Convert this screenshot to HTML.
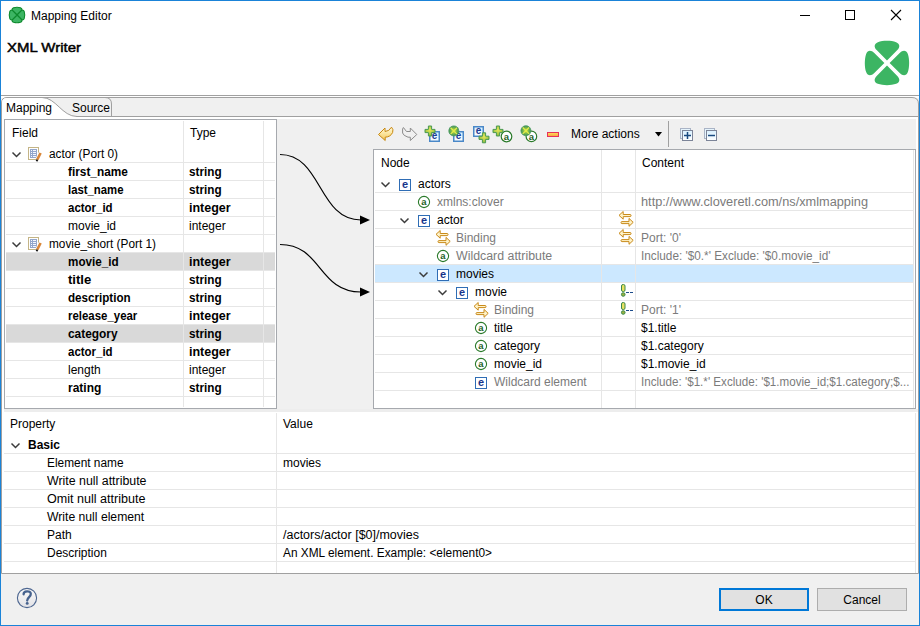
<!DOCTYPE html>
<html><head><meta charset="utf-8"><style>
html,body{margin:0;padding:0;width:920px;height:626px;overflow:hidden;background:#f0f0f0}
svg{display:block}
text{font-family:"Liberation Sans",sans-serif;white-space:pre}
</style></head><body>
<svg width="920" height="626" viewBox="0 0 920 626">
<rect x="0" y="0" width="920" height="626" fill="#f0f0f0"/>
<rect x="1" y="1" width="918" height="97" fill="#ffffff"/>
<rect x="1" y="95" width="918" height="1" fill="#a0a0a0"/>
<rect x="0" y="0" width="920" height="1" fill="#1a83d8"/>
<rect x="0" y="625" width="920" height="1" fill="#1a83d8"/>
<rect x="0" y="0" width="1" height="626" fill="#1a83d8"/>
<rect x="919" y="0" width="1" height="626" fill="#1a83d8"/>
<g transform="translate(17,15) scale(0.95)" fill="#3cb563" stroke="#0e8a2e" stroke-width="1.2" stroke-linejoin="round"><path transform="rotate(0)" d="M0,0L-4.6,-4.6C-5.6,-5.8 -5.2,-7 -3.6,-7.6C-1.6,-8.2 1.6,-8.2 3.6,-7.6C5.2,-7 5.6,-5.8 4.6,-4.6Z"/><path transform="rotate(90)" d="M0,0L-4.6,-4.6C-5.6,-5.8 -5.2,-7 -3.6,-7.6C-1.6,-8.2 1.6,-8.2 3.6,-7.6C5.2,-7 5.6,-5.8 4.6,-4.6Z"/><path transform="rotate(180)" d="M0,0L-4.6,-4.6C-5.6,-5.8 -5.2,-7 -3.6,-7.6C-1.6,-8.2 1.6,-8.2 3.6,-7.6C5.2,-7 5.6,-5.8 4.6,-4.6Z"/><path transform="rotate(270)" d="M0,0L-4.6,-4.6C-5.6,-5.8 -5.2,-7 -3.6,-7.6C-1.6,-8.2 1.6,-8.2 3.6,-7.6C5.2,-7 5.6,-5.8 4.6,-4.6Z"/></g>
<text x="31" y="20" font-size="12" fill="#000" >Mapping Editor</text>
<g stroke="#000" stroke-width="1" fill="none" shape-rendering="crispEdges">
<path d="M800,15.5H810"/>
<rect x="845.5" y="10.5" width="9" height="9"/>
</g>
<path d="M891,10L901,20M901,10L891,20" stroke="#000" stroke-width="1.1" fill="none"/>
<text x="7" y="52" font-size="13.4" fill="#000" stroke="#000" stroke-width="0.45" textLength="74" lengthAdjust="spacingAndGlyphs">XML Writer</text>
<g transform="translate(887,63) scale(0.97)" fill="#3cb563"><path transform="rotate(0)" d="M0,-2.7L-10.4,-13.1C-13.8,-16.5 -13.4,-19.9 -9.4,-21.5C-4.2,-23.3 4.2,-23.3 9.4,-21.5C13.4,-19.9 13.8,-16.5 10.4,-13.1Z"/><path transform="rotate(90)" d="M0,-2.7L-10.4,-13.1C-13.8,-16.5 -13.4,-19.9 -9.4,-21.5C-4.2,-23.3 4.2,-23.3 9.4,-21.5C13.4,-19.9 13.8,-16.5 10.4,-13.1Z"/><path transform="rotate(180)" d="M0,-2.7L-10.4,-13.1C-13.8,-16.5 -13.4,-19.9 -9.4,-21.5C-4.2,-23.3 4.2,-23.3 9.4,-21.5C13.4,-19.9 13.8,-16.5 10.4,-13.1Z"/><path transform="rotate(270)" d="M0,-2.7L-10.4,-13.1C-13.8,-16.5 -13.4,-19.9 -9.4,-21.5C-4.2,-23.3 4.2,-23.3 9.4,-21.5C13.4,-19.9 13.8,-16.5 10.4,-13.1Z"/></g>
<path d="M1.5,573.5V103 Q1.5,97.5 7,97.5H912 Q918.5,97.5 918.5,104V573.5H1.5Z" fill="#f0f0f0" stroke="#a0a0a0" stroke-width="1"/>
<rect x="76" y="116" width="842" height="1" fill="#a0a0a0"/>
<rect x="2" y="117" width="916" height="2" fill="#ffffff"/>
<rect x="2" y="117" width="2" height="295" fill="#ffffff"/>
<rect x="916" y="119" width="2" height="290" fill="#ffffff"/>
<path d="M46,97.5H105 Q111.5,97.5 111.5,104V116" fill="none" stroke="#a0a0a0"/>
<path d="M2,117V103 Q2,98 7,98H42 C56,98 62,116.5 77,116.5V119H2Z" fill="#ffffff"/>
<path d="M42,97.5 C56,97.5 62,116.5 77,116.5" fill="none" stroke="#a0a0a0"/>
<text x="6" y="112" font-size="12" fill="#000" >Mapping</text>
<text x="72" y="112" font-size="12" fill="#000" >Source</text>
<rect x="4" y="119" width="273" height="290" fill="#a6a9ae"/>
<rect x="5" y="120" width="271" height="288" fill="#ffffff"/>
<rect x="6" y="253" width="269" height="17" fill="#d9d9d9"/>
<rect x="6" y="325" width="269" height="17" fill="#d9d9d9"/>
<rect x="6" y="162" width="269" height="1" fill="#e6e6e6"/>
<rect x="6" y="180" width="269" height="1" fill="#e6e6e6"/>
<rect x="6" y="198" width="269" height="1" fill="#e6e6e6"/>
<rect x="6" y="216" width="269" height="1" fill="#e6e6e6"/>
<rect x="6" y="234" width="269" height="1" fill="#e6e6e6"/>
<rect x="6" y="252" width="269" height="1" fill="#e6e6e6"/>
<rect x="6" y="270" width="269" height="1" fill="#e6e6e6"/>
<rect x="6" y="288" width="269" height="1" fill="#e6e6e6"/>
<rect x="6" y="306" width="269" height="1" fill="#e6e6e6"/>
<rect x="6" y="324" width="269" height="1" fill="#e6e6e6"/>
<rect x="6" y="342" width="269" height="1" fill="#e6e6e6"/>
<rect x="6" y="360" width="269" height="1" fill="#e6e6e6"/>
<rect x="6" y="378" width="269" height="1" fill="#e6e6e6"/>
<rect x="6" y="396" width="269" height="1" fill="#e6e6e6"/>
<rect x="183" y="121" width="1" height="286" fill="#e6e6e6"/>
<rect x="263" y="121" width="1" height="286" fill="#e6e6e6"/>
<text x="12" y="137" font-size="12" fill="#000" >Field</text>
<text x="190" y="137" font-size="12" fill="#000" >Type</text>
<path d="M12.5,152.5L16.5,156.5L20.5,152.5" fill="none" stroke="#3c3c3c" stroke-width="1.5"/>
<g transform="translate(28,147)"><rect x="0.5" y="0.5" width="10" height="12" fill="#fff" stroke="#c4b486"/><rect x="2" y="2" width="7" height="9" fill="#93a7cc"/><path d="M3,3.5h1M5,3.5h3M3,5.5h1M5,5.5h3M3,7.5h1M5,7.5h3M3,9.5h1M5,9.5h3" stroke="#f4f8ff" stroke-width="1"/><path d="M9.2,12.6L12.6,6" stroke="#fff" stroke-width="4"/><path d="M9.2,12.6L12.6,6" stroke="#d9873a" stroke-width="2.6"/><path d="M8.5,14.2l0.9,-1.6" stroke="#111" stroke-width="1.8"/></g>
<text x="49" y="158" font-size="12" fill="#000"  textLength="69" lengthAdjust="spacingAndGlyphs">actor (Port 0)</text>
<text x="68" y="176" font-size="12" font-weight="bold" fill="#000"  textLength="59.9" lengthAdjust="spacingAndGlyphs">first_name</text>
<text x="189" y="176" font-size="12" font-weight="bold" fill="#000"  textLength="32.6" lengthAdjust="spacingAndGlyphs">string</text>
<text x="68" y="194" font-size="12" font-weight="bold" fill="#000"  textLength="55.5" lengthAdjust="spacingAndGlyphs">last_name</text>
<text x="189" y="194" font-size="12" font-weight="bold" fill="#000"  textLength="32.6" lengthAdjust="spacingAndGlyphs">string</text>
<text x="68" y="212" font-size="12" font-weight="bold" fill="#000"  textLength="44.6" lengthAdjust="spacingAndGlyphs">actor_id</text>
<text x="189" y="212" font-size="12" font-weight="bold" fill="#000"  textLength="41.7" lengthAdjust="spacingAndGlyphs">integer</text>
<text x="68" y="230" font-size="12" fill="#000" >movie_id</text>
<text x="189" y="230" font-size="12" fill="#000" >integer</text>
<path d="M12.5,242.5L16.5,246.5L20.5,242.5" fill="none" stroke="#3c3c3c" stroke-width="1.5"/>
<g transform="translate(28,237)"><rect x="0.5" y="0.5" width="10" height="12" fill="#fff" stroke="#c4b486"/><rect x="2" y="2" width="7" height="9" fill="#93a7cc"/><path d="M3,3.5h1M5,3.5h3M3,5.5h1M5,5.5h3M3,7.5h1M5,7.5h3M3,9.5h1M5,9.5h3" stroke="#f4f8ff" stroke-width="1"/><path d="M9.2,12.6L12.6,6" stroke="#fff" stroke-width="4"/><path d="M9.2,12.6L12.6,6" stroke="#d9873a" stroke-width="2.6"/><path d="M8.5,14.2l0.9,-1.6" stroke="#111" stroke-width="1.8"/></g>
<text x="49" y="248" font-size="12" fill="#000"  textLength="107" lengthAdjust="spacingAndGlyphs">movie_short (Port 1)</text>
<text x="68" y="266" font-size="12" font-weight="bold" fill="#000"  textLength="50.6" lengthAdjust="spacingAndGlyphs">movie_id</text>
<text x="189" y="266" font-size="12" font-weight="bold" fill="#000"  textLength="41.7" lengthAdjust="spacingAndGlyphs">integer</text>
<text x="68" y="284" font-size="12" font-weight="bold" fill="#000"  textLength="23.3" lengthAdjust="spacingAndGlyphs">title</text>
<text x="189" y="284" font-size="12" font-weight="bold" fill="#000"  textLength="32.6" lengthAdjust="spacingAndGlyphs">string</text>
<text x="68" y="302" font-size="12" font-weight="bold" fill="#000"  textLength="62.6" lengthAdjust="spacingAndGlyphs">description</text>
<text x="189" y="302" font-size="12" font-weight="bold" fill="#000"  textLength="32.6" lengthAdjust="spacingAndGlyphs">string</text>
<text x="68" y="320" font-size="12" font-weight="bold" fill="#000"  textLength="69.3" lengthAdjust="spacingAndGlyphs">release_year</text>
<text x="189" y="320" font-size="12" font-weight="bold" fill="#000"  textLength="41.7" lengthAdjust="spacingAndGlyphs">integer</text>
<text x="68" y="338" font-size="12" font-weight="bold" fill="#000"  textLength="49.6" lengthAdjust="spacingAndGlyphs">category</text>
<text x="189" y="338" font-size="12" font-weight="bold" fill="#000"  textLength="32.6" lengthAdjust="spacingAndGlyphs">string</text>
<text x="68" y="356" font-size="12" font-weight="bold" fill="#000"  textLength="44.6" lengthAdjust="spacingAndGlyphs">actor_id</text>
<text x="189" y="356" font-size="12" font-weight="bold" fill="#000"  textLength="41.7" lengthAdjust="spacingAndGlyphs">integer</text>
<text x="68" y="374" font-size="12" fill="#000" >length</text>
<text x="189" y="374" font-size="12" fill="#000" >integer</text>
<text x="68" y="392" font-size="12" font-weight="bold" fill="#000"  textLength="33.3" lengthAdjust="spacingAndGlyphs">rating</text>
<text x="189" y="392" font-size="12" font-weight="bold" fill="#000"  textLength="32.6" lengthAdjust="spacingAndGlyphs">string</text>
<g fill="none" stroke="#000" stroke-width="1.2">
<path d="M280,154.5 C322,154.5 318,220 361,220"/>
<path d="M280,244.5 C322,244.5 318,292 361,292"/>
</g>
<path d="M360,215.5L370,220L360,224.5Z" fill="#000"/>
<path d="M360,287.5L370,292L360,296.5Z" fill="#000"/>
<defs><linearGradient id="gy" x1="0" y1="0" x2="0" y2="1"><stop offset="0" stop-color="#fffae0"/><stop offset="0.5" stop-color="#fbe49a"/><stop offset="1" stop-color="#f2c45a"/></linearGradient><radialGradient id="gp" cx="0.5" cy="0.4" r="0.6"><stop offset="0" stop-color="#e8e858"/><stop offset="1" stop-color="#88b840"/></radialGradient><radialGradient id="gb" cx="0.5" cy="0.5" r="0.5"><stop offset="0" stop-color="#d8e848"/><stop offset="0.45" stop-color="#8cc048"/><stop offset="1" stop-color="#3c9058"/></radialGradient><linearGradient id="gm" x1="0" y1="0" x2="0" y2="1"><stop offset="0" stop-color="#ffe060"/><stop offset="1" stop-color="#f8a040"/></linearGradient><linearGradient id="gbox" x1="0" y1="0" x2="0" y2="1"><stop offset="0" stop-color="#d8f0ff"/><stop offset="1" stop-color="#ffffff"/></linearGradient></defs>
<path d="M378.5,134.5L385,128V131.5Q389,131.5 391.5,127.2Q393.8,129.5 392.6,132.5Q390.5,137 385.2,137.2V140.5Z" fill="url(#gy)" stroke="#c8880e" stroke-width="1" stroke-linejoin="round"/>
<path d="M416.8,134.5L410.3,128V131.5H406.5L403.4,127.5L402.6,129V133L404.2,135.3L408,137.2H410.3V140.5Z" fill="none" stroke="#8c8c8c" stroke-width="1" stroke-linejoin="round"/>
<rect x="429.75" y="131.75" width="9.5" height="9.5" fill="url(#gbox)" stroke="#4a88c8" stroke-width="1.5"/><text x="434.6" y="139.4" font-size="10" font-weight="bold" fill="#1c3c94" text-anchor="middle" font-family="Liberation Serif">e</text>
<path transform="translate(430,131)" d="M-1.6,-5H1.6V-1.6H5V1.6H1.6V5H-1.6V1.6H-5V-1.6H-1.6Z" fill="url(#gp)" stroke="#4a9a50" stroke-width="1" stroke-linejoin="round"/>
<rect x="453.75" y="131.75" width="9.5" height="9.5" fill="url(#gbox)" stroke="#4a88c8" stroke-width="1.5"/><text x="458.6" y="139.4" font-size="10" font-weight="bold" fill="#1c3c94" text-anchor="middle" font-family="Liberation Serif">e</text>
<g transform="translate(453.8,130.9)"><circle r="5" fill="url(#gb)" stroke="#4a9a60" stroke-width="0.8"/><path d="M-3.2,-3.2L3.2,3.2M3.2,-3.2L-3.2,3.2" stroke="#e4ec48" stroke-width="1.3"/></g>
<rect x="473.75" y="126.75" width="9.5" height="9.5" fill="url(#gbox)" stroke="#4a88c8" stroke-width="1.5"/><text x="478.6" y="134.4" font-size="10" font-weight="bold" fill="#1c3c94" text-anchor="middle" font-family="Liberation Serif">e</text>
<path transform="translate(484,137.8)" d="M-1.6,-5H1.6V-1.6H5V1.6H1.6V5H-1.6V1.6H-5V-1.6H-1.6Z" fill="url(#gp)" stroke="#4a9a50" stroke-width="1" stroke-linejoin="round"/>
<g transform="translate(506.5,136.5)"><circle r="5.3" fill="#fff" stroke="#2a7a2a" stroke-width="1.2"/><text x="0" y="3.4" font-size="9.5" font-weight="bold" fill="#1f621f" text-anchor="middle">a</text></g>
<path transform="translate(498,131)" d="M-1.6,-5H1.6V-1.6H5V1.6H1.6V5H-1.6V1.6H-5V-1.6H-1.6Z" fill="url(#gp)" stroke="#4a9a50" stroke-width="1" stroke-linejoin="round"/>
<g transform="translate(531.4,136.4)"><circle r="5.3" fill="#fff" stroke="#2a7a2a" stroke-width="1.2"/><text x="0" y="3.4" font-size="9.5" font-weight="bold" fill="#1f621f" text-anchor="middle">a</text></g>
<g transform="translate(525.9,130.7)"><circle r="5" fill="url(#gb)" stroke="#4a9a60" stroke-width="0.8"/><path d="M-3.2,-3.2L3.2,3.2M3.2,-3.2L-3.2,3.2" stroke="#e4ec48" stroke-width="1.3"/></g>
<rect x="547.5" y="132.5" width="11" height="4" fill="url(#gm)" stroke="#e8305a" stroke-width="1"/>
<rect x="680.5" y="128.5" width="10" height="10" fill="#e6f4fc" stroke="#aab4c6"/>
<rect x="682.5" y="130.5" width="10" height="10" fill="url(#gbox)" stroke="#7c8498"/>
<path d="M684,135.5H691M687.5,132V139" stroke="#1a4a80" stroke-width="1.5"/>
<rect x="704.5" y="128.5" width="10" height="10" fill="#e6f4fc" stroke="#aab4c6"/>
<rect x="706.5" y="130.5" width="10" height="10" fill="url(#gbox)" stroke="#7c8498"/>
<path d="M708,135.5H715" stroke="#1a4a80" stroke-width="1.5"/>
<text x="571" y="138" font-size="12" fill="#000" >More actions</text>
<path d="M655,132H662L658.5,136.5Z" fill="#000"/>
<rect x="668" y="121" width="1" height="26" fill="#a0a0a0"/>
<rect x="373" y="149" width="543" height="260" fill="#a6a9ae"/>
<rect x="374" y="150" width="541" height="258" fill="#ffffff"/>
<rect x="375" y="265" width="538" height="17" fill="#cce8ff"/>
<rect x="375" y="192" width="538" height="1" fill="#e6e6e6"/>
<rect x="375" y="210" width="538" height="1" fill="#e6e6e6"/>
<rect x="375" y="228" width="538" height="1" fill="#e6e6e6"/>
<rect x="375" y="246" width="538" height="1" fill="#e6e6e6"/>
<rect x="375" y="264" width="538" height="1" fill="#e6e6e6"/>
<rect x="375" y="282" width="538" height="1" fill="#e6e6e6"/>
<rect x="375" y="300" width="538" height="1" fill="#e6e6e6"/>
<rect x="375" y="318" width="538" height="1" fill="#e6e6e6"/>
<rect x="375" y="336" width="538" height="1" fill="#e6e6e6"/>
<rect x="375" y="354" width="538" height="1" fill="#e6e6e6"/>
<rect x="375" y="372" width="538" height="1" fill="#e6e6e6"/>
<rect x="375" y="390" width="538" height="1" fill="#e6e6e6"/>
<rect x="601" y="150" width="1" height="258" fill="#e6e6e6"/>
<rect x="635" y="150" width="1" height="258" fill="#e6e6e6"/>
<rect x="913" y="150" width="1" height="258" fill="#e6e6e6"/>
<text x="381" y="167" font-size="12" fill="#000" >Node</text>
<text x="642" y="167" font-size="12" fill="#000" >Content</text>
<path d="M381.5,182.5L385.5,186.5L389.5,182.5" fill="none" stroke="#3c3c3c" stroke-width="1.5"/>
<g transform="translate(399,179)"><rect x="0.5" y="0.5" width="11" height="11" fill="#fff" stroke="#2f6db5"/><text x="6" y="8.9" font-size="11" font-weight="bold" fill="#17358a" text-anchor="middle">e</text></g>
<text x="418" y="188" font-size="12" fill="#000" >actors</text>
<g transform="translate(424,202)"><circle r="5.6" fill="#fff" stroke="#2a7a2a" stroke-width="1.1"/><text x="0" y="3.3" font-size="9.5" font-weight="bold" fill="#1f621f" text-anchor="middle">a</text></g>
<text x="437" y="206" font-size="12" fill="#7b7b7b" >xmlns:clover</text>
<text x="641" y="206" font-size="12" fill="#7b7b7b"  textLength="227" lengthAdjust="spacingAndGlyphs">http://www.cloveretl.com/ns/xmlmapping</text>
<path d="M400.5,218.5L404.5,222.5L408.5,218.5" fill="none" stroke="#3c3c3c" stroke-width="1.5"/>
<g transform="translate(418,215)"><rect x="0.5" y="0.5" width="11" height="11" fill="#fff" stroke="#2f6db5"/><text x="6" y="8.9" font-size="11" font-weight="bold" fill="#17358a" text-anchor="middle">e</text></g>
<text x="437" y="224" font-size="12" fill="#000" >actor</text>
<g transform="translate(618,211)" stroke="#c98a1a" stroke-width="1" fill="#fff3c8" stroke-linejoin="round"><path d="M1,4.35L5.2,0.5V3.5H12A1,1 0 0 1 12,5.6H5.2V8.2Z"/><path d="M15.2,11.35L11,7.4V10.6H4A1,1 0 0 0 4,12.6H11V15.3Z"/></g>
<g transform="translate(435,230)" stroke="#c98a1a" stroke-width="1" fill="#fff3c8" stroke-linejoin="round"><path d="M1,4.35L5.2,0.5V3.5H12A1,1 0 0 1 12,5.6H5.2V8.2Z"/><path d="M15.2,11.35L11,7.4V10.6H4A1,1 0 0 0 4,12.6H11V15.3Z"/></g>
<text x="456" y="242" font-size="12" fill="#7b7b7b" >Binding</text>
<g transform="translate(618,229)" stroke="#c98a1a" stroke-width="1" fill="#fff3c8" stroke-linejoin="round"><path d="M1,4.35L5.2,0.5V3.5H12A1,1 0 0 1 12,5.6H5.2V8.2Z"/><path d="M15.2,11.35L11,7.4V10.6H4A1,1 0 0 0 4,12.6H11V15.3Z"/></g>
<text x="641" y="242" font-size="12" fill="#7b7b7b" >Port: &#x27;0&#x27;</text>
<g transform="translate(443,256)"><circle r="5.6" fill="#fff" stroke="#2a7a2a" stroke-width="1.1"/><text x="0" y="3.3" font-size="9.5" font-weight="bold" fill="#1f621f" text-anchor="middle">a</text></g>
<text x="456" y="260" font-size="12" fill="#7b7b7b"  textLength="96.2" lengthAdjust="spacingAndGlyphs">Wildcard attribute</text>
<text x="641" y="260" font-size="12" fill="#7b7b7b"  textLength="189.5" lengthAdjust="spacingAndGlyphs">Include: &#x27;$0.*&#x27; Exclude: &#x27;$0.movie_id&#x27;</text>
<path d="M419.5,272.5L423.5,276.5L427.5,272.5" fill="none" stroke="#3c3c3c" stroke-width="1.5"/>
<g transform="translate(437,269)"><rect x="0.5" y="0.5" width="11" height="11" fill="#fff" stroke="#2f6db5"/><text x="6" y="8.9" font-size="11" font-weight="bold" fill="#17358a" text-anchor="middle">e</text></g>
<text x="456" y="278" font-size="12" fill="#000" >movies</text>
<path d="M438.5,290.5L442.5,294.5L446.5,290.5" fill="none" stroke="#3c3c3c" stroke-width="1.5"/>
<g transform="translate(456,287)"><rect x="0.5" y="0.5" width="11" height="11" fill="#fff" stroke="#2f6db5"/><text x="6" y="8.9" font-size="11" font-weight="bold" fill="#17358a" text-anchor="middle">e</text></g>
<text x="475" y="296" font-size="12" fill="#000" >movie</text>
<g transform="translate(621,284)"><rect x="0.5" y="0.5" width="3.5" height="7" rx="1.5" fill="#e8e060" stroke="#3a8a4a"/><circle cx="2.25" cy="10.5" r="1.8" fill="#9ab040" stroke="#3a8a4a"/><path d="M5,8.5h3M9,8.5h3" stroke="#1a4a8a" stroke-width="1.2"/></g>
<g transform="translate(473,302)" stroke="#c98a1a" stroke-width="1" fill="#fff3c8" stroke-linejoin="round"><path d="M1,4.35L5.2,0.5V3.5H12A1,1 0 0 1 12,5.6H5.2V8.2Z"/><path d="M15.2,11.35L11,7.4V10.6H4A1,1 0 0 0 4,12.6H11V15.3Z"/></g>
<text x="494" y="314" font-size="12" fill="#7b7b7b" >Binding</text>
<g transform="translate(621,302)"><rect x="0.5" y="0.5" width="3.5" height="7" rx="1.5" fill="#e8e060" stroke="#3a8a4a"/><circle cx="2.25" cy="10.5" r="1.8" fill="#9ab040" stroke="#3a8a4a"/><path d="M5,8.5h3M9,8.5h3" stroke="#1a4a8a" stroke-width="1.2"/></g>
<text x="641" y="314" font-size="12" fill="#7b7b7b" >Port: &#x27;1&#x27;</text>
<g transform="translate(481,328)"><circle r="5.6" fill="#fff" stroke="#2a7a2a" stroke-width="1.1"/><text x="0" y="3.3" font-size="9.5" font-weight="bold" fill="#1f621f" text-anchor="middle">a</text></g>
<text x="494" y="332" font-size="12" fill="#000" >title</text>
<text x="641" y="332" font-size="12" fill="#000" >$1.title</text>
<g transform="translate(481,346)"><circle r="5.6" fill="#fff" stroke="#2a7a2a" stroke-width="1.1"/><text x="0" y="3.3" font-size="9.5" font-weight="bold" fill="#1f621f" text-anchor="middle">a</text></g>
<text x="494" y="350" font-size="12" fill="#000" >category</text>
<text x="641" y="350" font-size="12" fill="#000" >$1.category</text>
<g transform="translate(481,364)"><circle r="5.6" fill="#fff" stroke="#2a7a2a" stroke-width="1.1"/><text x="0" y="3.3" font-size="9.5" font-weight="bold" fill="#1f621f" text-anchor="middle">a</text></g>
<text x="494" y="368" font-size="12" fill="#000" >movie_id</text>
<text x="641" y="368" font-size="12" fill="#000" >$1.movie_id</text>
<g transform="translate(475,377)"><rect x="0.5" y="0.5" width="11" height="11" fill="#fff" stroke="#2f6db5"/><text x="6" y="8.9" font-size="11" font-weight="bold" fill="#17358a" text-anchor="middle">e</text></g>
<text x="494" y="386" font-size="12" fill="#7b7b7b" >Wildcard element</text>
<clipPath id="cc"><rect x="636" y="370" width="276" height="20"/></clipPath>
<text x="641" y="386" font-size="12" fill="#7b7b7b" clip-path="url(#cc)" textLength="268.5" lengthAdjust="spacingAndGlyphs">Include: &#x27;$1.*&#x27; Exclude: &#x27;$1.movie_id;$1.category;$...</text>
<rect x="2" y="412" width="916" height="161" fill="#ffffff"/>
<rect x="4" y="409" width="912" height="3" fill="#ededed"/>
<rect x="4" y="453" width="911" height="1" fill="#e6e6e6"/>
<rect x="4" y="471" width="911" height="1" fill="#e6e6e6"/>
<rect x="4" y="489" width="911" height="1" fill="#e6e6e6"/>
<rect x="4" y="507" width="911" height="1" fill="#e6e6e6"/>
<rect x="4" y="525" width="911" height="1" fill="#e6e6e6"/>
<rect x="4" y="543" width="911" height="1" fill="#e6e6e6"/>
<rect x="4" y="561" width="911" height="1" fill="#e6e6e6"/>
<rect x="276" y="413" width="1" height="160" fill="#e6e6e6"/>
<rect x="915" y="413" width="1" height="160" fill="#e6e6e6"/>
<text x="10" y="428" font-size="12" fill="#000" >Property</text>
<text x="283" y="428" font-size="12" fill="#000" >Value</text>
<path d="M11.5,443.5L15.5,447.5L19.5,443.5" fill="none" stroke="#3c3c3c" stroke-width="1.5"/>
<text x="28" y="449" font-size="12" font-weight="bold" fill="#000" >Basic</text>
<text x="47" y="467" font-size="12" fill="#000"  textLength="76.5" lengthAdjust="spacingAndGlyphs">Element name</text>
<text x="283" y="467" font-size="12" fill="#000" >movies</text>
<text x="47" y="485" font-size="12" fill="#000"  textLength="99.5" lengthAdjust="spacingAndGlyphs">Write null attribute</text>
<text x="47" y="503" font-size="12" fill="#000"  textLength="98.4" lengthAdjust="spacingAndGlyphs">Omit null attribute</text>
<text x="47" y="521" font-size="12" fill="#000"  textLength="97.2" lengthAdjust="spacingAndGlyphs">Write null element</text>
<text x="47" y="539" font-size="12" fill="#000" >Path</text>
<text x="283" y="539" font-size="12" fill="#000"  textLength="136" lengthAdjust="spacingAndGlyphs">/actors/actor [$0]/movies</text>
<text x="47" y="557" font-size="12" fill="#000"  textLength="59.8" lengthAdjust="spacingAndGlyphs">Description</text>
<text x="283" y="557" font-size="12" fill="#000"  textLength="209" lengthAdjust="spacingAndGlyphs">An XML element. Example: &lt;element0&gt;</text>
<defs><linearGradient id="gh" x1="0" y1="0" x2="0" y2="1"><stop offset="0" stop-color="#fafafa"/><stop offset="1" stop-color="#e2e2e6"/></linearGradient></defs>
<circle cx="27" cy="598" r="9.6" fill="url(#gh)" stroke="#4d6690" stroke-width="1.1"/>
<path d="M23.6,594.3C23.4,590.6 30.6,590.2 30.8,593.8C31,597 27.2,597.2 27.2,600.6" fill="none" stroke="#46628e" stroke-width="2.3" stroke-linecap="round"/>
<circle cx="27.2" cy="603.4" r="1.45" fill="#46628e"/>
<rect x="719" y="588" width="90" height="23" fill="#0078d7"/>
<rect x="721" y="590" width="86" height="19" fill="#e1e1e1"/>
<text x="764" y="604" font-size="12" fill="#000" text-anchor="middle">OK</text>
<rect x="817" y="588" width="90" height="23" fill="#adadad"/>
<rect x="818" y="589" width="88" height="21" fill="#e1e1e1"/>
<text x="862" y="604" font-size="12" fill="#000" text-anchor="middle">Cancel</text>
</svg>
</body></html>
